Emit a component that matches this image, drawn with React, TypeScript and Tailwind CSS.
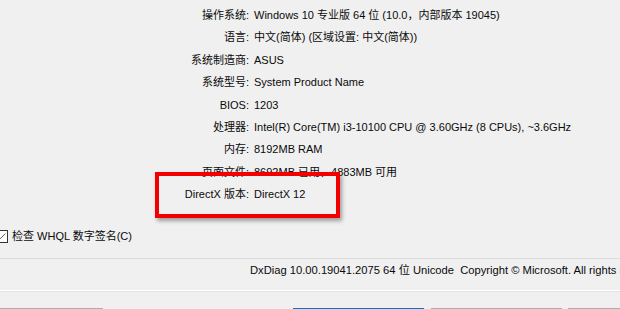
import { Check } from 'lucide-react';

const rows: [string, string][] = [
  ['操作系统:', 'Windows 10 专业版 64 位 (10.0，内部版本 19045)'],
  ['语言:', '中文(简体) (区域设置: 中文(简体))'],
  ['系统制造商:', 'ASUS'],
  ['系统型号:', 'System Product Name'],
  ['BIOS:', '1203'],
  ['处理器:', 'Intel(R) Core(TM) i3-10100 CPU @ 3.60GHz (8 CPUs), ~3.6GHz'],
  ['内存:', '8192MB RAM'],
  ['页面文件:', '8692MB 已用，4883MB 可用'],
  ['DirectX 版本:', 'DirectX 12'],
];

export default function App() {
  return (
    <div
      className="relative w-[620px] h-[309px] overflow-hidden bg-[#f0f0f0] text-[11px] text-[#0a0a0a]"
      style={{ fontFamily: '"Liberation Sans", "Noto Sans CJK SC", sans-serif' }}
    >
      {/* System info rows */}
      <div className="pt-[4px]">
        {rows.map(([label, value]) => (
          <div key={label} className="flex items-center h-[22.4px] whitespace-nowrap">
            <div className="w-[249px] shrink-0 text-right">{label}</div>
            <div className="pl-[5px]">{value}</div>
          </div>
        ))}
      </div>

      {/* WHQL checkbox */}
      <div className="flex items-center h-[22px] mt-[20px] ml-[-5px] gap-[4px] whitespace-nowrap">
        <div className="w-[13px] h-[13px] shrink-0 border border-[#333] bg-white flex items-center justify-center">
          <Check className="w-[11px] h-[11px] text-[#222]" strokeWidth={1.6} />
        </div>
        <span>检查 WHQL 数字签名(C)</span>
      </div>

      {/* Footer */}
      <div className="mt-[10px] border-t border-[#dcdcdc]">
        <div className="h-[24px] flex items-center pl-[250px] whitespace-nowrap overflow-hidden text-[11.2px]">
          DxDiag 10.00.19041.2075 64 位 Unicode&nbsp;&nbsp;Copyright © Microsoft. All rights reserved.
        </div>
        <div className="h-[7px]" />
        <div className="h-[1px] bg-white" />
        <div className="h-[1px] bg-[#e3e3e3]" />
        <div className="flex gap-[7px] mt-[16px]">
          <div className="w-[131px] h-[23px] shrink-0 ml-[-28px] border border-[#adadad] bg-[#e1e1e1]" />
          <div className="w-[131px] h-[23px] shrink-0 ml-[183px] border border-[#0078d7] bg-[#e5f1fb]" />
          <div className="w-[131px] h-[23px] shrink-0 border border-[#adadad] bg-[#e1e1e1]" />
          <div className="w-[131px] h-[23px] shrink-0 ml-[-1px] border border-[#adadad] bg-[#e1e1e1]" />
        </div>
      </div>

      {/* Red annotation box */}
      <div className="absolute left-[155px] top-[172px] w-[185px] h-[46px] border-[4px] border-[#f20000] shadow-[2px_3px_4px_rgba(0,0,0,0.35)]" />
    </div>
  );
}
